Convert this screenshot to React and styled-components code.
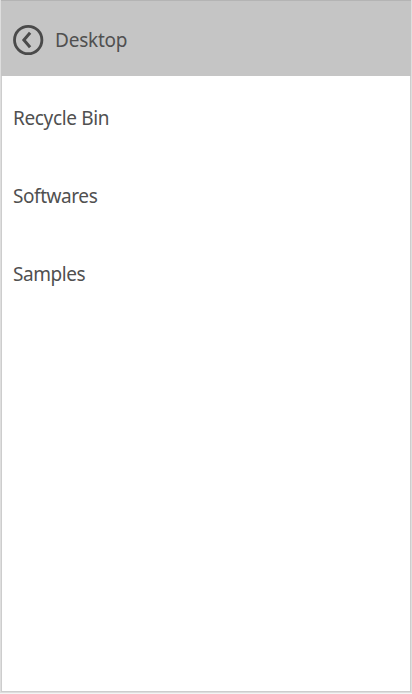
import React from "react";
import styled, { createGlobalStyle } from "styled-components";

const GlobalStyle = createGlobalStyle`
  *, *::before, *::after { box-sizing: border-box; }
  body { margin: 0; background: #f4f4f4; font-family: "Noto Sans", "Open Sans", sans-serif; }
`;

const Panel = styled.main`
  width: 412px;
  height: 693px;
  border: 1px solid #dedede;
  border-top: 0;
  background: #fff;
  overflow: hidden;
`;

const Content = styled.div`
  height: 692px;
  border: 1px solid #cdcdcd;
  border-top: 0;
`;

const Header = styled.header`
  display: flex;
  align-items: center;
  height: 76px;
  margin: 0 -1px;
  padding: 3px 0 0 11px;
  background: #c5c5c5;
  border-top: 1px solid #b4b4b4;
`;

const BackButton = styled.button`
  display: flex;
  padding: 0;
  border: 0;
  background: none;
  color: #4a4a4a;
`;

const Label = styled.span`
  font-size: 19px;
  line-height: 26px;
  color: #505050;
  white-space: nowrap;
  letter-spacing: ${(p) => p.$spacing}px;
`;

const Title = styled(Label)`
  margin-left: 11px;
`;

const List = styled.ul`
  margin: 0;
  padding: 3px 0 0;
  list-style: none;
`;

const Row = styled.li`
  display: flex;
  align-items: center;
  height: 78px;
  padding-left: 11px;
`;

const items = [
  { name: "Recycle Bin", spacing: -0.36 },
  { name: "Softwares", spacing: -0.43 },
  { name: "Samples", spacing: -0.45 },
];

export default function App() {
  return (
    <>
      <GlobalStyle />
      <Panel>
        <Content>
          <Header>
            <BackButton aria-label="Back">
              <svg width="32" height="32" viewBox="0 0 32 32" fill="none" stroke="currentColor" strokeWidth="3">
                <circle cx="16.2" cy="16" r="13.7" strokeWidth="2.8" />
                <path d="M18.1 8.8L11.9 16L18.1 23.2" />
              </svg>
            </BackButton>
            <Title $spacing={-0.22}>Desktop</Title>
          </Header>
          <List>
            {items.map((item) => (
              <Row key={item.name}>
                <Label $spacing={item.spacing}>{item.name}</Label>
              </Row>
            ))}
          </List>
        </Content>
      </Panel>
    </>
  );
}
